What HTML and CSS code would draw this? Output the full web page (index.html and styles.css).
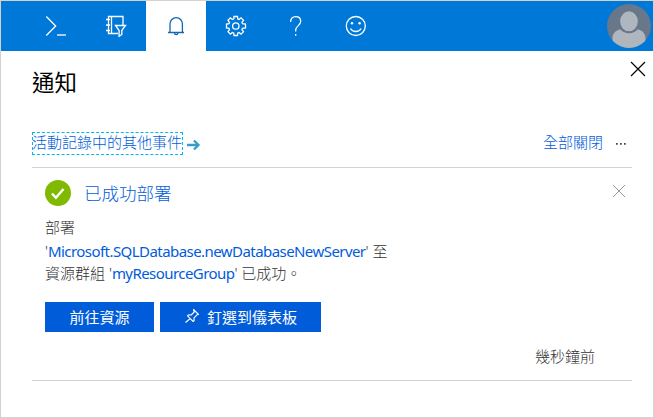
FILE: index.html
```html
<!DOCTYPE html>
<html lang="zh-Hant">
<head>
<meta charset="utf-8">
<title>通知</title>
<link rel="stylesheet" href="styles.css">
</head>
<body>
<div class="frame">
  <header class="topbar">
    <nav class="tools">
      <span class="tool"><svg width="24" height="24" viewBox="0 0 24 24"><path d="M2.300 2.500 11.700 12l-9.400 9.500"/><path class="cursor" d="M13 21h9"/></svg></span>
      <span class="tool"><svg width="24" height="24" viewBox="0 0 24 24"><path d="M19 11V2.500H4.500v17H14M7.500 2.500v17M2 5.500h4M2 11h4M2 16.500h4"/><path class="funnel" d="M11.500 11.500h10l-3.700 5v4l-2.700 1.700v-5.700z"/></svg></span>
      <span class="tool selected"><svg width="24" height="24" viewBox="0 0 24 24"><path d="M4 18.500h16M6 18.500V9.800a6.200 6.200 0 0 1 12.400 0v8.700M10.500 19a1.700 1.700 0 0 0 3.400 0"/></svg></span>
      <span class="tool"><svg width="24" height="24" viewBox="0 0 24 24"><path d="M9.800 4.900 10 2.500h3.500l.2 2.400 1.300.6 2-1.600 2.500 2.400-1.600 2 .6 1.400 3 .3v4l-3 .3-.6 1.400 1.600 2-2.500 2.400-2-1.600-1.300.6-.2 2.400H10l-.2-2.400-1.400-.6-2 1.600L4 17.700l1.500-2-.5-1.400-2.500-.3v-4l2.500-.3.5-1.400-1.500-2L6.400 3.900l2 1.600z"/><circle cx="11.800" cy="12" r="3.200"/></svg></span>
      <span class="tool"><svg width="24" height="24" viewBox="0 0 24 24"><path d="M6.600 8c0-3.500 2-5.400 5.100-5.400 3 0 5 1.900 5 4.700 0 4.500-5 4.600-5 8.700v1.500M11.700 20v1.700"/></svg></span>
      <span class="tool"><svg width="24" height="24" viewBox="0 0 24 24"><circle cx="11.800" cy="12" r="9.500"/><path d="M6.500 14.500c2.200 4 8.400 4 10.600 0"/><circle class="dot" cx="8" cy="9.300" r="1.200"/><circle class="dot" cx="15.600" cy="9.300" r="1.200"/></svg></span>
    </nav>
    <svg class="avatar" width="44" height="44" viewBox="0 0 44 44"><defs><clipPath id="face"><circle cx="22" cy="22" r="22"/></clipPath></defs><g clip-path="url(#face)"><path fill="#687789" d="M0 0h44v44H0z"/><path fill="#afb6bd" d="M5.500 46V34c0-4 3-8 8-8.500 4.500 5 12.500 5 17 0 5 .5 8 4.500 8 8.500v12z"/><ellipse cx="22" cy="17.300" rx="9.600" ry="10.800" fill="#afb6bd" stroke="#687789" stroke-width="1.500"/></g></svg>
  </header>
  <main class="panel">
    <div class="heading">
      <h1>通知</h1>
      <svg class="close" width="16" height="16" viewBox="0 0 16 16"><path d="m1 1 14 14M15 1 1 15"/></svg>
    </div>
    <div class="actions">
      <a class="more-events">活動記錄中的其他事件</a>
      <svg class="arrow" width="14" height="12" viewBox="0 0 14 12"><path d="M0 6h11M7 1.500 11.500 6 7 10.500"/></svg>
      <a class="dismiss-all">全部關閉</a>
      <svg class="ellipsis" width="12" height="4" viewBox="0 0 12 4"><path d="M1 1h1.700v1.700H1zM5 1h1.700v1.700H5zM9 1h1.700v1.700H9z"/></svg>
    </div>
    <article class="notice">
      <div class="notice-head">
        <svg width="26" height="26" viewBox="0 0 26 26"><circle cx="13" cy="13" r="13" fill="#7fba00"/><path class="check" d="m7 13.500 3.900 4.200L18.500 9"/></svg>
        <h2>已成功部署</h2>
        <svg class="dismiss" width="14" height="14" viewBox="0 0 14 14"><path d="m1 1 12 12M13 1 1 13"/></svg>
      </div>
      <div class="message">
        <p>部署</p>
        <p class="resource">'<a>Microsoft.SQLDatabase.newDatabaseNewServer</a>' 至</p>
        <p>資源群組 '<a>myResourceGroup</a>' 已成功。</p>
      </div>
      <div class="buttons">
        <span class="button go">前往資源</span>
        <span class="button pin"><svg width="16" height="16" viewBox="0 0 16 16"><path d="m9.500 1.500 5 5-1.500.3-3 3 .2 2.700-1 1L3.500 7.800l1-1 2.700.2 3-3zM6.300 10.500 1.500 14.500"/></svg>釘選到儀表板</span>
      </div>
      <time>幾秒鐘前</time>
    </article>
  </main>
</div>
</body>
</html>
```

FILE: styles.css
```css
* { box-sizing: border-box; }
body { margin: 0; background: #fff; font-family: "Noto Sans", "Noto Sans CJK TC", sans-serif; font-size: 15px; font-weight: 300; color: #333; }
h1, h2, p { margin: 0; font-weight: 300; }
svg { display: block; flex: none; fill: none; }
a { color: #015cda; }

.frame { width: 654px; height: 418px; border: 1px solid #d2d2d2; overflow: hidden; }
.topbar { display: flex; justify-content: space-between; height: 50px; padding: 0 2px 0 25px; background: #0078d7; }
.tools { display: flex; }
.tool { display: flex; width: 60px; align-items: center; justify-content: center; stroke: #fff; stroke-width: 1.3; }
.tool.selected { background: #fff; stroke: #1267b4; }
.cursor { stroke: #a6cff1; stroke-width: 2; }
.funnel { fill: #0078d7; }
.dot { fill: #fff; stroke: none; }
.avatar { margin-top: 3px; }

.panel { padding: 0 21px 0 31px; }
.heading { display: flex; justify-content: space-between; height: 64px; margin-right: -14px; }
h1 { font-size: 22.500px; font-weight: 400; line-height: 63px; color: #000; }
.close { margin-top: 10px; stroke: #000; stroke-width: 1.2; }
.actions { display: flex; height: 53px; align-items: center; padding-top: 3px; border-bottom: 1px solid #d2d2d2; }
.more-events { height: 23px; width: 151px; margin-top: 2px; outline: 1px dashed #00b9f2; outline-offset: -1px; line-height: 20px; white-space: nowrap; }
.arrow { margin: 4px 0 0 4px; stroke: #389bc9; stroke-width: 2.300; }
.dismiss-all { margin: -2px 0 0 auto; line-height: 22px; }
.ellipsis { margin: 3px 5px 0 12px; fill: #444; }

.notice { display: flex; flex-direction: column; height: 213px; padding: 0 6px 0 13px; border-bottom: 1px solid #d2d2d2; }
.notice-head { display: flex; height: 50px; align-items: center; }
h2 { margin: -1px 0 0 13px; font-size: 17.500px; line-height: 26px; color: #015cda; }
.check { stroke: #fff; stroke-width: 2.400; }
.dismiss { margin: -4px 0 0 auto; stroke: #999; }
.message { height: 84px; margin-top: -2px; margin-bottom: 2px; }
.message p { line-height: 22px; white-space: nowrap; }
.message .resource { margin-top: 2px; }
.message a { font-weight: 400; letter-spacing: -.56px; }
.buttons { display: flex; gap: 6px; }
.button { display: flex; height: 30px; align-items: center; justify-content: center; padding-bottom: 2px; background: #015cda; color: #fff; font-weight: 400; stroke-linejoin: round; }
.go { width: 109px; }
.pin { width: 161px; gap: 7px; stroke: #fff; }
.pin svg { stroke-width: 1.100; }
time { margin: 13px 31px 0 auto; line-height: 22px; }
```
